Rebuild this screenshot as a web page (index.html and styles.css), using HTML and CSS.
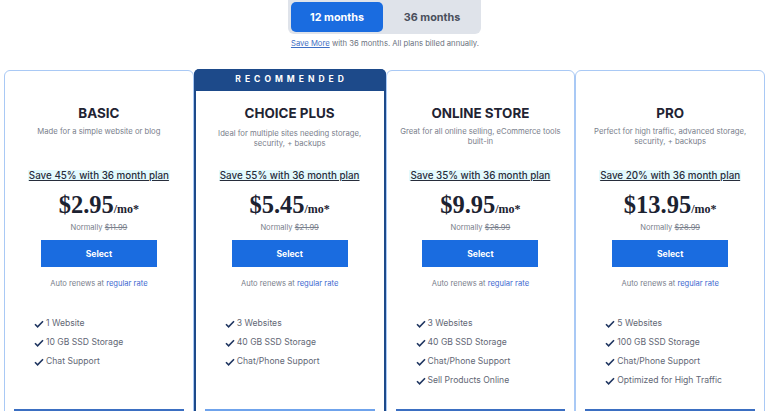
FILE: index.html
```html
<!DOCTYPE HTML>
<html>
<head>
<meta charset="utf-8">
<title>Plans</title>
<link rel="stylesheet" href="styles.css">
</head>
<body>
<div class="term">
	<div class="toggle">
		<button class="tab active">12 months</button>
		<button class="tab">36 months</button>
	</div>
	<p class="note"><a href="#">Save More</a> with 36 months. All plans billed annually.</p>
</div>

<div class="plans">
	<div class="card">
		<div class="flag"></div>
		<h2>BASIC</h2>
		<p class="desc">Made for a simple website or blog</p>
		<p class="save"><span>Save 45% with 36 month plan</span></p>
		<p class="price">$2.95<small>/mo*</small></p>
		<p class="normal">Normally <s>$11.99</s></p>
		<button class="select">Select</button>
		<p class="renew">Auto renews at <a href="#">regular rate</a></p>
		<ul class="features">
			<li><svg viewBox="0 0 10 8"><path d="M1 4.2 L3.6 6.8 L9 1.2"/></svg>1 Website</li>
			<li><svg viewBox="0 0 10 8"><path d="M1 4.2 L3.6 6.8 L9 1.2"/></svg>10 GB SSD Storage</li>
			<li><svg viewBox="0 0 10 8"><path d="M1 4.2 L3.6 6.8 L9 1.2"/></svg>Chat Support</li>
		</ul>
		<div class="more dark"></div>
	</div>

	<div class="card pick">
		<div class="flag">RECOMMENDED</div>
		<h2>CHOICE PLUS</h2>
		<p class="desc">Ideal for multiple sites needing storage, security, + backups</p>
		<p class="save"><span>Save 55% with 36 month plan</span></p>
		<p class="price">$5.45<small>/mo*</small></p>
		<p class="normal">Normally <s>$21.99</s></p>
		<button class="select">Select</button>
		<p class="renew">Auto renews at <a href="#">regular rate</a></p>
		<ul class="features">
			<li><svg viewBox="0 0 10 8"><path d="M1 4.2 L3.6 6.8 L9 1.2"/></svg>3 Websites</li>
			<li><svg viewBox="0 0 10 8"><path d="M1 4.2 L3.6 6.8 L9 1.2"/></svg>40 GB SSD Storage</li>
			<li><svg viewBox="0 0 10 8"><path d="M1 4.2 L3.6 6.8 L9 1.2"/></svg>Chat/Phone Support</li>
		</ul>
		<div class="more"></div>
	</div>

	<div class="card">
		<div class="flag"></div>
		<h2>ONLINE STORE</h2>
		<p class="desc">Great for all online selling, eCommerce tools built-in</p>
		<p class="save"><span>Save 35% with 36 month plan</span></p>
		<p class="price">$9.95<small>/mo*</small></p>
		<p class="normal">Normally <s>$26.99</s></p>
		<button class="select">Select</button>
		<p class="renew">Auto renews at <a href="#">regular rate</a></p>
		<ul class="features">
			<li><svg viewBox="0 0 10 8"><path d="M1 4.2 L3.6 6.8 L9 1.2"/></svg>3 Websites</li>
			<li><svg viewBox="0 0 10 8"><path d="M1 4.2 L3.6 6.8 L9 1.2"/></svg>40 GB SSD Storage</li>
			<li><svg viewBox="0 0 10 8"><path d="M1 4.2 L3.6 6.8 L9 1.2"/></svg>Chat/Phone Support</li>
			<li><svg viewBox="0 0 10 8"><path d="M1 4.2 L3.6 6.8 L9 1.2"/></svg>Sell Products Online</li>
		</ul>
		<div class="more dark"></div>
	</div>

	<div class="card">
		<div class="flag"></div>
		<h2>PRO</h2>
		<p class="desc">Perfect for high traffic, advanced storage, security, + backups</p>
		<p class="save"><span>Save 20% with 36 month plan</span></p>
		<p class="price">$13.95<small>/mo*</small></p>
		<p class="normal">Normally <s>$28.99</s></p>
		<button class="select">Select</button>
		<p class="renew">Auto renews at <a href="#">regular rate</a></p>
		<ul class="features">
			<li><svg viewBox="0 0 10 8"><path d="M1 4.2 L3.6 6.8 L9 1.2"/></svg>5 Websites</li>
			<li><svg viewBox="0 0 10 8"><path d="M1 4.2 L3.6 6.8 L9 1.2"/></svg>100 GB SSD Storage</li>
			<li><svg viewBox="0 0 10 8"><path d="M1 4.2 L3.6 6.8 L9 1.2"/></svg>Chat/Phone Support</li>
			<li><svg viewBox="0 0 10 8"><path d="M1 4.2 L3.6 6.8 L9 1.2"/></svg>Optimized for High Traffic</li>
		</ul>
		<div class="more dark"></div>
	</div>
</div>
</body>
</html>
```

FILE: styles.css
```css
body {
	margin: 0;
	background: #fff;
	font-family: Inter, "Open Sans", sans-serif;
	color: #1f2638;
	overflow: hidden;
}

p {
	margin: 0;
}

a {
	color: #3f6fc4;
	text-decoration: none;
}

/* term switch */
.term {
	display: flex;
	flex-direction: column;
	align-items: center;
}

.toggle {
	display: flex;
	gap: 3px;
	width: 193px;
	height: 34px;
	box-sizing: border-box;
	padding: 2px 3px 2px 3px;
	background: #dfe3ea;
	border-radius: 0 0 6px 6px;
	margin-left: 1px;
}

.tab {
	flex: 1;
	border: 0;
	border-radius: 5px;
	background: transparent;
	font-family: inherit;
	font-size: 10.8px;
	font-weight: 700;
	color: #4a4f5c;
}

.tab.active {
	background: #1a6ce0;
	color: #fff;
	flex: 0 0 92px;
}

.note {
	margin-top: 5px;
	font-size: 7.7px;
	line-height: 10px;
	color: #6b7280;
	margin-left: 2px;
}

.note a {
	text-decoration: underline;
}

/* cards */
.plans {
	display: flex;
	margin: 21px 3px 0 4px;
}

.card {
	flex: 1;
	border: 1px solid #a9c9f5;
	border-radius: 6px 6px 0 0;
	height: 400px;
	text-align: center;
	display: flex;
	flex-direction: column;
	align-items: center;
	box-sizing: border-box;
}

.card.pick {
	border: 2px solid #1d4a8a;
	border-top: 0;
	margin-top: -1px;
	height: 402px;
}

.flag {
	align-self: stretch;
	height: 20px;
	font-size: 8.5px;
	font-weight: 700;
	letter-spacing: 4px;
	line-height: 20px;
	color: #fff;
	padding-left: 4px;
}

.pick .flag {
	background: #1d4a8a;
	height: 22px;
	line-height: 21px;
	border-radius: 5px 5px 0 0;
	margin: 0 -2px;
}

h2 {
	margin: 13px 0 0;
	font-size: 13.4px;
	line-height: 18px;
	font-weight: 700;
	color: #1f2433;
}

.desc {
	margin-top: 5px;
	height: 38px;
	font-size: 7.7px;
	line-height: 10px;
	color: #7a808c;
	padding: 0 11px;
}

.pick .desc {
	margin-top: 7px;
	height: 36px;
	padding: 0 16px;
}

.save {
	margin-top: 4px;
	font-size: 9.8px;
	line-height: 13px;
	font-weight: 500;
	color: #272d3b;
}

.save span {
	background: #e4fafd;
	text-decoration: underline;
	padding: 0 1px;
}

.price {
	margin-top: 9px;
	font-family: "Liberation Serif", "DejaVu Serif", serif;
	font-size: 24.5px;
	line-height: 28px;
	font-weight: 700;
	color: #1c2231;
}

.price small {
	font-size: 12px;
}

.normal {
	margin-top: 0;
	font-size: 7.6px;
	line-height: 10px;
	color: #7a808c;
}

.select {
	margin-top: 7px;
	width: 116px;
	height: 27px;
	border: 0;
	background: #1a6ce0;
	color: #fff;
	font-family: inherit;
	font-size: 8.6px;
	font-weight: 700;
}

.renew {
	margin-top: 12px;
	font-size: 7.6px;
	line-height: 10px;
	color: #7a808c;
}

.renew a {
	color: #3f6ad0;
}

.features {
	list-style: none;
	margin: 25px 0 0;
	padding: 0 0 0 29px;
	align-self: stretch;
	text-align: left;
	height: 76px;
}

.features li {
	height: 19px;
	line-height: 19px;
	font-size: 8.6px;
	color: #626775;
	display: flex;
	align-items: center;
	gap: 2px;
}

.features svg {
	width: 10px;
	height: 8px;
	fill: none;
	stroke: #1f3560;
	stroke-width: 1.6;
}

.more {
	margin-top: 19px;
	align-self: stretch;
	margin-left: 9px;
	margin-right: 9px;
	border-top: 2px solid #6fa3ec;
}

.more.dark {
	border-top-color: #3b6fc2;
}
```
